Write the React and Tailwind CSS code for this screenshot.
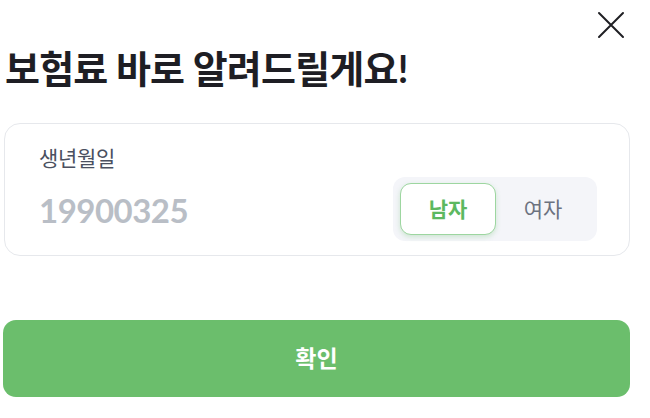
export default function App() {
  const font = { fontFamily: 'Lato, "Noto Sans CJK KR", sans-serif' };
  return (
    <div className="w-[650px] h-[418px] bg-white relative overflow-hidden" style={font}>
      <button className="absolute left-[597px] top-[11px] w-[28px] h-[28px] text-[#1f1f24]">
        <svg viewBox="0 0 28 28" width="28" height="28" fill="none" stroke="currentColor" strokeWidth="2" strokeLinecap="round">
          <path d="M2 2 L26 26 M26 2 L2 26" />
        </svg>
      </button>

      <div className="pl-[4px] pr-[20px] pt-[43px] flex flex-col">
        <h1 className="text-[38px] leading-[50px] font-bold text-[#1e1e24] tracking-[-0.8px] pl-[1px]">
          보험료 바로 알려드릴게요!
        </h1>

        <div className="mt-[30px] h-[133px] rounded-[16px] border border-[#e6e8ec] pl-[34px] pr-[32px] pt-[20px] flex flex-col">
          <div className="text-[21px] leading-[28px] font-normal text-[#4a5060] tracking-[-0.3px]">생년월일</div>
          <div className="flex items-center justify-between mt-[5px]">
            <div className="text-[33px] leading-[40px] font-bold text-[#b9bec6] tracking-[-0.5px] mt-[2px]">19900325</div>
            <div className="flex items-center bg-[#f4f5f9] rounded-[12px] p-[7px] w-[204px] h-[64px]">
              <button className="w-[96px] h-[52px] rounded-[11px] bg-white border border-[#9dd6a0] shadow-[0_2px_5px_rgba(92,184,96,0.25)] text-[21px] font-bold text-[#5cb860]">
                남자
              </button>
              <button className="flex-1 h-[52px] text-[21px] font-normal text-[#6c7280]">
                여자
              </button>
            </div>
          </div>
        </div>

        <button className="mt-[64px] -ml-[1px] h-[77px] rounded-[13px] bg-[#6bbe6c] text-white text-[23px] font-bold">
          확인
        </button>
      </div>
    </div>
  );
}
